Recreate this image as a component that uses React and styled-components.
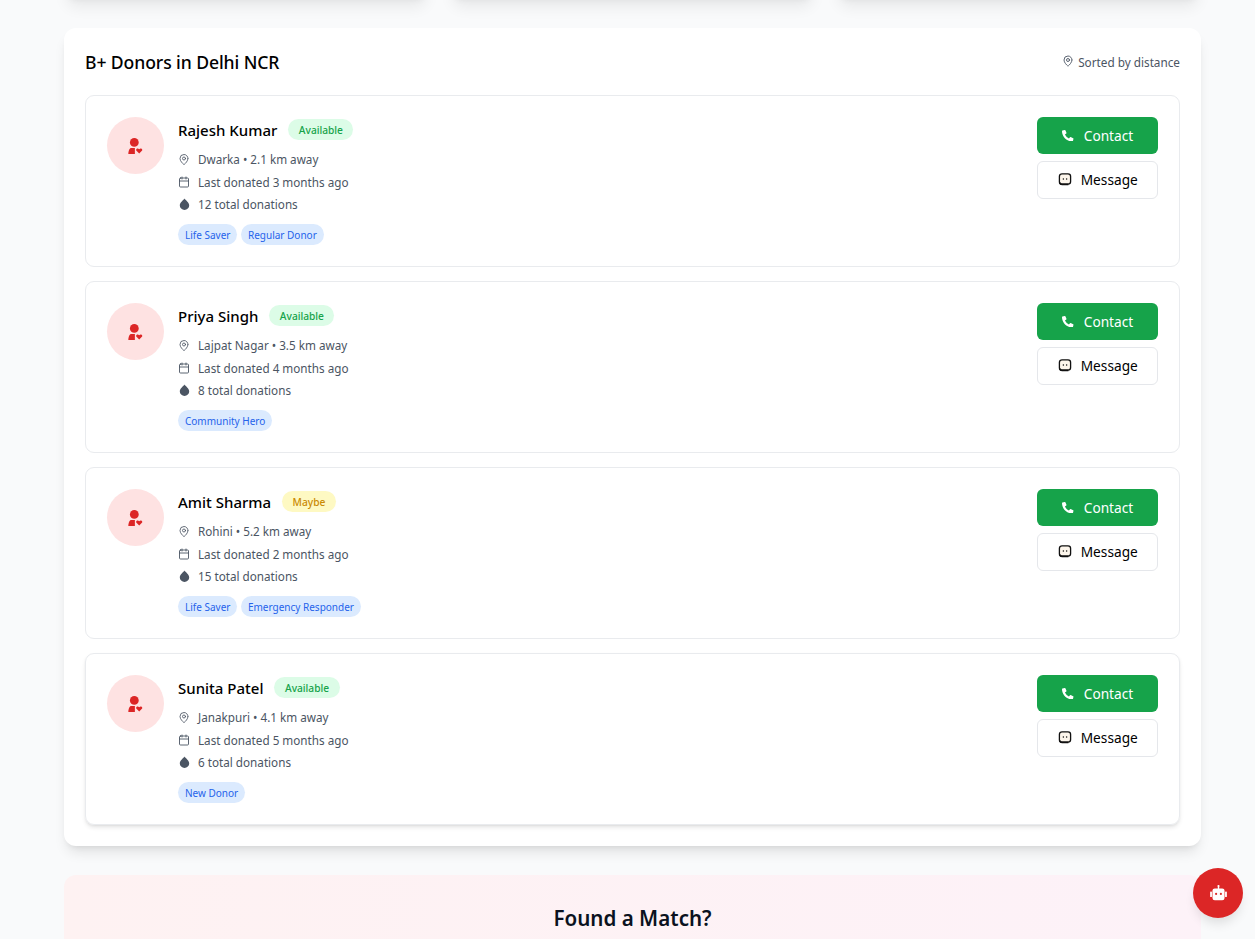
import React from "react";
import styled, { createGlobalStyle } from "styled-components";
import { FaPhoneAlt } from "react-icons/fa";
import { MapPin, Calendar } from "lucide-react";

const Global = createGlobalStyle`
  * { box-sizing: border-box; }
  html, body { margin: 0; height: 100%; overflow: hidden; background: #f9fafb; }
  body { font-family: "Noto Sans", "Open Sans", sans-serif; color: #111827; }
`;
const Page = styled.main`
  height: 939px;
  overflow: hidden;
  padding: 0 54px 0 64px;
`;
const StatRow = styled.div`
  display: grid;
  grid-template-columns: repeat(3, 1fr);
  gap: 21px;
  margin-top: -100px;
  margin-bottom: 28px;
`;
const StatCard = styled.div`
  height: 100px;
  background: #fff;
  border-radius: 12px;
  box-shadow: 0 10px 15px -3px rgba(0, 0, 0, 0.07), 0 4px 6px -4px rgba(0, 0, 0, 0.05);
`;
const Panel = styled.section`
  background: #fff;
  border-radius: 12px;
  padding: 21px;
  box-shadow: 0 9px 13px -3px rgba(0, 0, 0, 0.1), 0 4px 6px -4px rgba(0, 0, 0, 0.1);
  margin-bottom: 29px;
`;
const PanelHead = styled.header`
  display: flex;
  justify-content: space-between;
  align-items: center;
  height: 26px;
  margin-bottom: 20px;
`;
const Title = styled.h2`
  margin: 0;
  font-size: 17.6px;
  font-weight: 500;
  color: #000;
  letter-spacing: -0.1px;
`;
const SortNote = styled.div`
  display: flex;
  align-items: center;
  gap: 4px;
  font-size: 11.75px;
  color: #4b5563;
  svg { margin-top: -2px; }
`;
const List = styled.div`
  display: flex;
  flex-direction: column;
  gap: 14px;
`;
const Row = styled.article`
  height: 172px;
  display: flex;
  justify-content: space-between;
  padding: 21px;
  border: 1px solid #e9ebee;
  border-radius: 9px;
  box-shadow: ${(p) => (p.$raised ? "0 3px 5px -1px rgba(0,0,0,0.12), 0 1px 3px -1px rgba(0,0,0,0.08)" : "none")};
`;
const Left = styled.div`
  display: flex;
  gap: 14px;
`;
const Avatar = styled.div`
  width: 57px;
  height: 57px;
  border-radius: 50%;
  background: #fee2e2;
  color: #dc2626;
  display: flex;
  align-items: center;
  justify-content: center;
`;
const Info = styled.div`
  display: flex;
  flex-direction: column;
`;
const NameLine = styled.div`
  display: flex;
  align-items: center;
  gap: 11px;
  height: 24px;
  margin-bottom: 7.2px;
`;
const Name = styled.h3`
  margin: 2px 0 0;
  font-size: 15px;
  font-weight: 500;
  color: #000;
`;
const Status = styled.span`
  height: 21px;
  margin-top: 2px;
  display: inline-flex;
  align-items: center;
  padding: 0 10.5px;
  border-radius: 999px;
  font-size: 10.2px;
  font-weight: 500;
  background: ${(p) => (p.$tone === "maybe" ? "#fef9c3" : "#dcfce7")};
  color: ${(p) => (p.$tone === "maybe" ? "#ca8a04" : "#16a34a")};
`;
const Meta = styled.div`
  display: flex;
  align-items: center;
  gap: 8px;
  height: 22.4px;
  font-size: 11.7px;
  color: #4b5563;
`;
const MetaIcon = styled.span`
  width: 12px;
  display: inline-flex;
  justify-content: center;
  color: #4b5563;
`;
const Tags = styled.div`
  display: flex;
  gap: 3.5px;
  margin-top: 8.8px;
`;
const Tag = styled.span`
  height: 21px;
  display: inline-flex;
  align-items: center;
  padding: 0 7px;
  border-radius: 999px;
  background: #dbeafe;
  color: #2563eb;
  font-size: 10px;
`;
const Actions = styled.div`
  width: 121.5px;
  display: flex;
  flex-direction: column;
  gap: 7px;
`;
const Button = styled.button`
  height: ${(p) => (p.$primary ? "37px" : "38px")};
  display: flex;
  align-items: center;
  justify-content: center;
  gap: ${(p) => (p.$primary ? "10px" : "9px")};
  padding: ${(p) => (p.$primary ? "0 0 0 1px" : "0 0 2px 1px")};
  font: inherit;
  font-size: 13.7px;
  border-radius: 6px;
  background: ${(p) => (p.$primary ? "#16a34a" : "#fff")};
  color: ${(p) => (p.$primary ? "#fff" : "#000")};
  border: ${(p) => (p.$primary ? "none" : "1px solid #e5e7eb")};
`;
const Cta = styled.section`
  height: 200px;
  padding-top: 28px;
  border-radius: 12px;
  text-align: center;
  background: linear-gradient(90deg, #fef2f2, #fdf2f8);
`;
const CtaTitle = styled.h2`
  margin: 0;
  font-size: 20.6px;
  font-weight: 600;
  line-height: 30px;
  color: #0b1220;
`;
const Bot = styled.button`
  position: fixed;
  left: 1193px;
  top: 868px;
  width: 50px;
  height: 50px;
  padding: 0;
  border: 0;
  border-radius: 50%;
  background: #dc2626;
  color: #fff;
  display: flex;
  align-items: center;
  justify-content: center;
  box-shadow: 0 8px 12px -3px rgba(0, 0, 0, 0.12);
`;

const ChatGlyph = () => (
  <svg width="14" height="14" viewBox="0 0 14 14">
    <path d="M4 1.8h6a2.6 2.6 0 0 1 2.6 2.6v5.2a2.6 2.6 0 0 1-2.6 2.6H3.6a2.2 2.2 0 0 1-2.2-2.2V4.4A2.6 2.6 0 0 1 4 1.8z" fill="#fdf6ec" stroke="#111" strokeWidth="1.3" />
    <path d="M1.6 10.6c.4 1 1.2 1.8 2.4 1.8h6.4" fill="none" stroke="#111" strokeWidth="1.7" />
    <circle cx="5.4" cy="7" r="0.75" fill="#111" />
    <circle cx="8.6" cy="7" r="0.75" fill="#111" />
  </svg>
);
const DropGlyph = () => (
  <svg width="11" height="12" viewBox="0 0 11 12">
    <path d="M5.5 .6C6.4 2.2 10.2 4.6 10.2 7.4a4.7 4.5 0 0 1-9.4 0C.8 4.6 4.6 2.2 5.5 .6z" fill="currentColor" />
  </svg>
);
const BotGlyph = () => (
  <svg width="19" height="16" viewBox="0 0 20 18">
    <rect x="9.2" y="0.5" width="1.6" height="4" fill="#fff" />
    <circle cx="10" cy="1.2" r="1.1" fill="#fff" />
    <rect x="3.2" y="3.8" width="13.6" height="13.4" rx="2.6" fill="#fff" />
    <rect x="0.6" y="7.2" width="2" height="6.4" rx="0.8" fill="#fff" />
    <rect x="17.4" y="7.2" width="2" height="6.4" rx="0.8" fill="#fff" />
    <circle cx="7.3" cy="10" r="1.2" fill="#dc2626" />
    <circle cx="12.7" cy="10" r="1.2" fill="#dc2626" />
  </svg>
);
const DonorGlyph = () => (
  <svg width="15" height="16" viewBox="0 0 15 16" fill="currentColor">
    <circle cx="6.3" cy="4.4" r="4.4" />
    <path d="M2.6 10h4.3v6H.3C.3 13.4 1 11.2 2.6 10z" />
    <path d="M11.2 15.4 8.5 12.8c-1.2-1.4.9-3.2 2.7-1.6 1.8-1.6 3.9.2 2.7 1.6z" />
  </svg>
);

const donors = [
  { name: "Rajesh Kumar", status: "Available", place: "Dwarka • 2.1 km away", last: "3 months", total: 12, tags: ["Life Saver", "Regular Donor"] },
  { name: "Priya Singh", status: "Available", place: "Lajpat Nagar • 3.5 km away", last: "4 months", total: 8, tags: ["Community Hero"] },
  { name: "Amit Sharma", status: "Maybe", place: "Rohini • 5.2 km away", last: "2 months", total: 15, tags: ["Life Saver", "Emergency Responder"] },
  { name: "Sunita Patel", status: "Available", place: "Janakpuri • 4.1 km away", last: "5 months", total: 6, tags: ["New Donor"] },
];

export default function App() {
  return (
    <Page>
      <Global />
      <StatRow>
        <StatCard />
        <StatCard />
        <StatCard />
      </StatRow>
      <Panel>
        <PanelHead>
          <Title>B+ Donors in Delhi NCR</Title>
          <SortNote>
            <MapPin size={12} strokeWidth={1.8} />
            Sorted by distance
          </SortNote>
        </PanelHead>
        <List>
          {donors.map((d, i) => (
            <Row key={d.name} $raised={i === donors.length - 1}>
              <Left>
                <Avatar>
                  <DonorGlyph />
                </Avatar>
                <Info>
                  <NameLine>
                    <Name>{d.name}</Name>
                    <Status $tone={d.status === "Maybe" ? "maybe" : "ok"}>{d.status}</Status>
                  </NameLine>
                  <Meta>
                    <MetaIcon><MapPin size={13} strokeWidth={1.7} /></MetaIcon>
                    {d.place}
                  </Meta>
                  <Meta>
                    <MetaIcon><Calendar size={12} strokeWidth={1.8} /></MetaIcon>
                    Last donated {d.last} ago
                  </Meta>
                  <Meta>
                    <MetaIcon><DropGlyph /></MetaIcon>
                    {d.total} total donations
                  </Meta>
                  <Tags>
                    {d.tags.map((t) => (
                      <Tag key={t}>{t}</Tag>
                    ))}
                  </Tags>
                </Info>
              </Left>
              <Actions>
                <Button $primary>
                  <FaPhoneAlt size={11.5} />
                  Contact
                </Button>
                <Button>
                  <ChatGlyph />
                  Message
                </Button>
              </Actions>
            </Row>
          ))}
        </List>
      </Panel>
      <Cta>
        <CtaTitle>Found a Match?</CtaTitle>
      </Cta>
      <Bot aria-label="Assistant">
        <BotGlyph />
      </Bot>
    </Page>
  );
}
